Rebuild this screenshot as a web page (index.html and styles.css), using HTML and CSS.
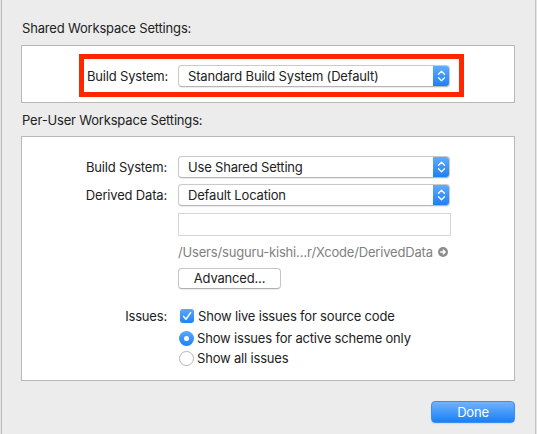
FILE: index.html
```html
<!DOCTYPE html>
<html>
<head>
<meta charset="utf-8">
<link rel="stylesheet" href="styles.css">
</head>
<body>
<div class="window">
  <div class="edge-left"></div>
  <div class="main">
    <div class="section-title">Shared Workspace Settings:</div>
    <div class="box box-shared">
      <div class="highlight">
        <span class="label">Build System:</span>
        <div class="popup">
          <span class="popup-text">Standard Build System (Default)</span>
          <span class="stepper"><svg width="17" height="22" viewBox="0 0 17 22"><path d="M5.5 9.2 L8.5 6.2 L11.5 9.2 M5.5 12.8 L8.5 15.8 L11.5 12.8" fill="none" stroke="#fff" stroke-width="1.3" stroke-linecap="round" stroke-linejoin="round"/></svg></span>
        </div>
      </div>
    </div>
    <div class="section-title title-second">Per-User Workspace Settings:</div>
    <div class="box box-user">
      <div class="form">
        <span class="label">Build System:</span>
        <div class="popup">
          <span class="popup-text">Use Shared Setting</span>
          <span class="stepper"><svg width="17" height="22" viewBox="0 0 17 22"><path d="M5.5 9.2 L8.5 6.2 L11.5 9.2 M5.5 12.8 L8.5 15.8 L11.5 12.8" fill="none" stroke="#fff" stroke-width="1.3" stroke-linecap="round" stroke-linejoin="round"/></svg></span>
        </div>
        <span class="label row-derived">Derived Data:</span>
        <div class="popup row-derived">
          <span class="popup-text">Default Location</span>
          <span class="stepper"><svg width="17" height="22" viewBox="0 0 17 22"><path d="M5.5 9.2 L8.5 6.2 L11.5 9.2 M5.5 12.8 L8.5 15.8 L11.5 12.8" fill="none" stroke="#fff" stroke-width="1.3" stroke-linecap="round" stroke-linejoin="round"/></svg></span>
        </div>
        <div class="textfield"></div>
        <div class="path">
          <span class="path-text">/Users/suguru-kishi…r/Xcode/DerivedData</span>
          <svg class="path-icon" width="10" height="10" viewBox="0 0 10 10"><circle cx="5" cy="5" r="5" fill="#8c8c8c"/><path d="M2.6 5 H7 M5.2 3 L7.2 5 L5.2 7" fill="none" stroke="#fff" stroke-width="1.3" stroke-linecap="round" stroke-linejoin="round"/></svg>
        </div>
        <div class="button advanced">Advanced...</div>
        <span class="label row-issues">Issues:</span>
        <div class="check-row row-issues">
          <span class="checkbox"><svg width="14" height="14" viewBox="0 0 14 14"><path d="M3.6 7.4 L6 10.2 L10.6 3.6" fill="none" stroke="#fff" stroke-width="1.5" stroke-linecap="round" stroke-linejoin="round"/></svg></span>
          <span>Show live issues for source code</span>
        </div>
        <div class="check-row radio-first">
          <span class="radio on"><span class="dot"></span></span>
          <span>Show issues for active scheme only</span>
        </div>
        <div class="check-row radio-second">
          <span class="radio"></span>
          <span>Show all issues</span>
        </div>
      </div>
    </div>
    <div class="footer">
      <div class="button done">Done</div>
    </div>
  </div>
  <div class="edge-right"></div>
</div>
</body>
</html>
```

FILE: styles.css
```css
html, body {
  margin: 0;
  padding: 0;
}
body {
  background: #ececec;
  font-family: "Inter", "Roboto", "Liberation Sans", sans-serif;
  font-size: 13px;
  letter-spacing: -0.18px;
  color: #222;
}
.window {
  width: 537px;
  height: 434px;
  display: flex;
  overflow: hidden;
  background: #ececec;
}
.edge-left {
  width: 1px;
  background: #e6e6e6;
  border-right: 1px solid #b9b9b9;
}
.edge-right {
  width: 1px;
  background: #e4e4e4;
  border-left: 1px solid #c4c4c4;
}
.main {
  flex: 1;
  padding: 20px 20px 0 19px;
  display: flex;
  flex-direction: column;
}
.section-title {
  line-height: 16px;
  padding-left: 1px;
}
.title-second {
  margin-top: 9px;
}
.box {
  background: #fff;
  border: 1px solid #b8b8b8;
}
.box-shared {
  margin-top: 9px;
  padding: 8px 0 0 57px;
  box-sizing: border-box;
  height: 58px;
}
.highlight {
  display: inline-flex;
  align-items: center;
  border: 5px solid #ff2600;
  height: 32px;
  padding: 1px 9px 0 3px;
  box-sizing: content-box;
}
.highlight .label {
  width: 80px;
  margin-right: 11px;
}
.label {
  text-align: right;
  line-height: 16px;
  white-space: nowrap;
}
.popup {
  width: 272px;
  height: 22px;
  box-sizing: border-box;
  background: #fff;
  border: 1px solid #cacaca;
  border-bottom-color: #b5b5b5;
  border-radius: 4px;
  display: flex;
  align-items: center;
  justify-content: space-between;
  box-shadow: 0 0.5px 1px rgba(0,0,0,0.08);
  overflow: hidden;
}
.popup-text {
  padding-left: 9px;
  line-height: 16px;
  white-space: nowrap;
}
.stepper {
  width: 17px;
  height: 22px;
  margin-right: -1px;
  background: linear-gradient(#64adfb, #1a7ef5);
  border-radius: 0 4px 4px 0;
  display: flex;
}
.box-user {
  margin-top: 8px;
  padding: 19px 0 13px 0;
}
.form {
  display: grid;
  grid-template-columns: 145px 272px;
  column-gap: 11px;
  align-items: center;
}
.form > * {
  grid-column: 2;
}
.form > .label {
  grid-column: 1;
}
.row-derived {
  margin-top: 6px;
}
.textfield {
  margin-top: 7px;
  height: 23px;
  box-sizing: border-box;
  border: 1px solid #d6d6d6;
  background: #fff;
  width: 273px;
}
.path {
  margin-top: 8px;
  display: flex;
  align-items: center;
  line-height: 16px;
  color: #7f7f7f;
  white-space: nowrap;
}
.path-icon {
  margin-left: 5px;
  flex: none;
}
.button {
  box-sizing: border-box;
  background: #fff;
  border: 1px solid #c6c6c6;
  border-bottom-color: #b0b0b0;
  border-radius: 4px;
  text-align: center;
  box-shadow: 0 0.5px 1px rgba(0,0,0,0.08);
}
.advanced {
  margin-top: 8px;
  width: 103px;
  height: 21px;
  line-height: 19px;
}
.row-issues {
  margin-top: 18px;
}
.check-row {
  display: flex;
  align-items: center;
  height: 18px;
  line-height: 16px;
  margin-left: 2px;
  white-space: nowrap;
}
.radio-first {
  margin-top: 4px;
}
.radio-second {
  margin-top: 2px;
}
.checkbox {
  width: 14px;
  height: 14px;
  border-radius: 3px;
  background: linear-gradient(#5aa8fb, #1f82f6);
  display: flex;
  margin-right: 4px;
  flex: none;
}
.radio {
  width: 15px;
  height: 15px;
  box-sizing: border-box;
  border-radius: 50%;
  border: 1px solid #b4b4b4;
  background: #fff;
  margin-right: 3px;
  margin-left: -1px;
  display: flex;
  align-items: center;
  justify-content: center;
  flex: none;
}
.radio.on {
  border: none;
  background: linear-gradient(#5aa8fb, #1f82f6);
}
.dot {
  width: 5px;
  height: 5px;
  border-radius: 50%;
  background: #fff;
}
.footer {
  margin-top: 20px;
  display: flex;
  justify-content: flex-end;
}
.done {
  width: 84px;
  height: 22px;
  line-height: 21px;
  color: #fff;
  border: 1px solid #3d8ef2;
  background: linear-gradient(#6fb3fb, #1a7ff7);
}
```
